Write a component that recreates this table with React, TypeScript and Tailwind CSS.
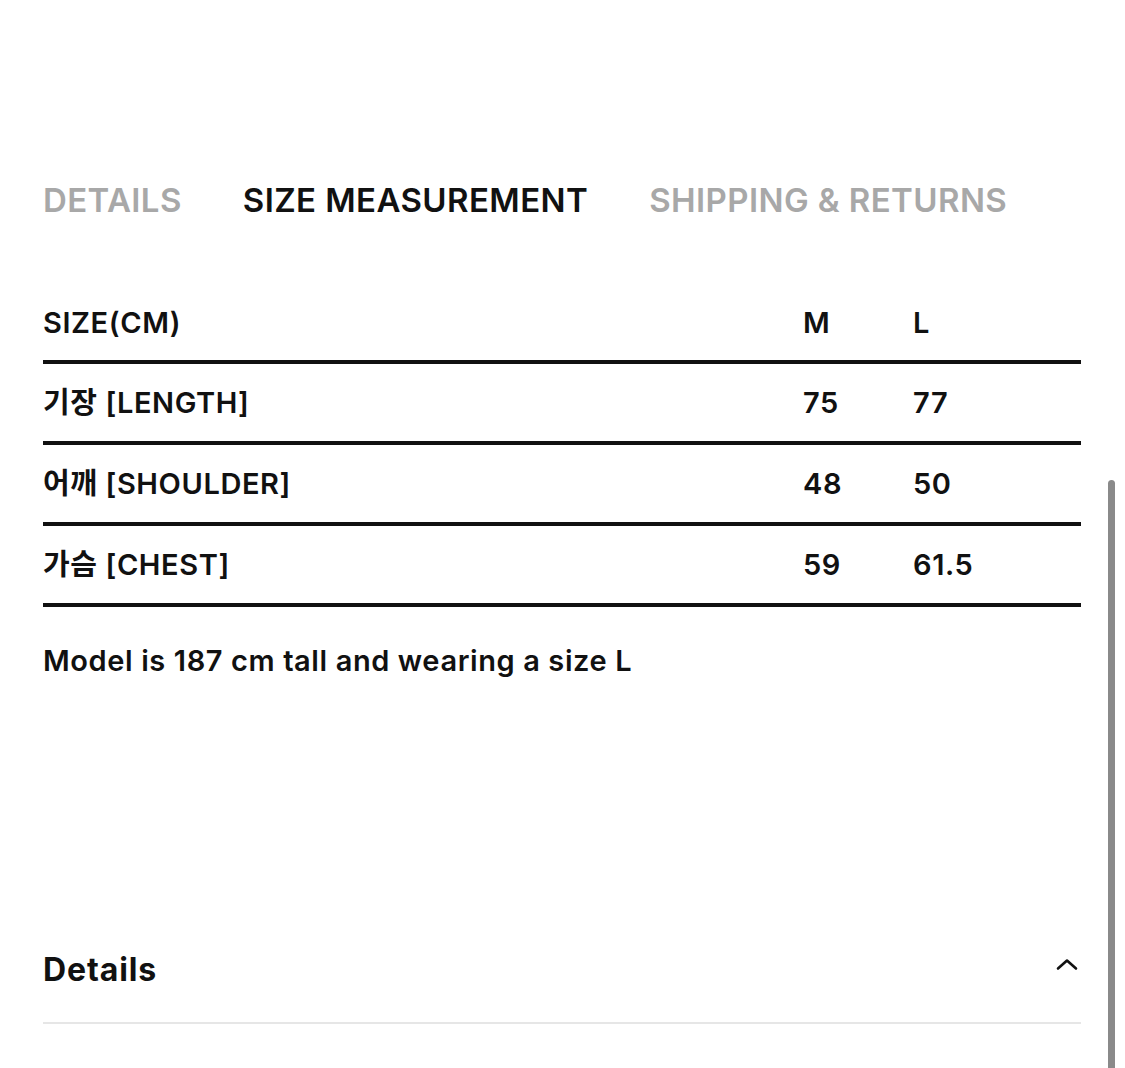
import React from "react";

const rows = [
  { label: "기장 [LENGTH]", m: "75", l: "77" },
  { label: "어깨 [SHOULDER]", m: "48", l: "50" },
  { label: "가슴 [CHEST]", m: "59", l: "61.5" },
];

const font = { fontFamily: 'Inter, "Noto Sans CJK KR", sans-serif' };

export default function App() {
  return (
    <div
      className="relative w-[1125px] h-[1068px] overflow-hidden bg-white text-[#111]"
      style={font}
    >
      <div className="pl-[43px] pr-[44px]">
        <div className="mt-[180px] flex items-center h-[40px] text-[33px] font-semibold tracking-[0.4px] leading-none">
          <span className="text-[#a8a8a8]">DETAILS</span>
          <span className="ml-[61px] text-[#111]">SIZE MEASUREMENT</span>
          <span className="ml-[61px] text-[#a8a8a8]">SHIPPING &amp; RETURNS</span>
        </div>

        <div className="mt-[66px] text-[29px] font-semibold tracking-[0.6px]">
          <div className="flex items-center h-[78px] border-b-4 border-[#111]">
            <span className="flex-1">SIZE(CM)</span>
            <span className="w-[110px]">M</span>
            <span className="w-[168px]">L</span>
          </div>
          {rows.map((r) => (
            <div
              key={r.label}
              className="flex items-center h-[81px] border-b-4 border-[#111]"
            >
              <span className="flex-1">{r.label}</span>
              <span className="w-[110px]">{r.m}</span>
              <span className="w-[168px]">{r.l}</span>
            </div>
          ))}
        </div>

        <div className="mt-[34px] h-[40px] flex items-center text-[29px] font-semibold tracking-[0.6px]">
          Model is 187 cm tall and wearing a size L
        </div>

        <div className="mt-[237px] flex items-center justify-between h-[106px] border-b-2 border-[#e6e6e6]">
          <span className="text-[32px] font-bold tracking-[0.9px]">Details</span>
          <svg
            width="24"
            height="24"
            viewBox="0 0 24 24"
            fill="none"
            stroke="#111"
            strokeWidth="2.6"
            strokeLinecap="round"
            strokeLinejoin="round"
            className="mr-[2px] mb-[12px]"
          >
            <path d="M3 16.5l9-8 9 8" />
          </svg>
        </div>
      </div>

      <div className="absolute left-[1108px] top-[480px] w-[7px] h-[600px] rounded-t-full bg-[#8a8a8a]" />
    </div>
  );
}
